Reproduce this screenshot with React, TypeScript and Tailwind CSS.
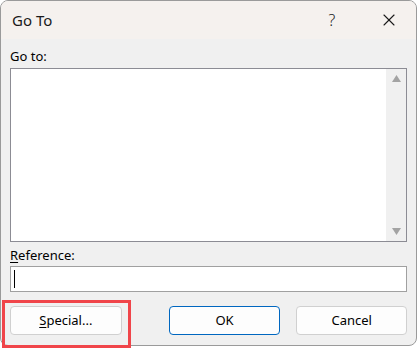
import { X } from "lucide-react";

export default function App() {
  return (
    <div className="w-[419px] h-[348px] bg-white relative" style={{ fontFamily: '"Noto Sans", "Segoe UI", sans-serif' }}>
      <div className="w-[417px] h-[346px] rounded-[8px] border border-[#9a9a9a] overflow-hidden bg-[#f0f0f0] flex flex-col">
        <div className="h-[38px] shrink-0 bg-[#f5f1ee] flex items-center pl-[11px] text-[15px] text-[#1a1a1a]">
          <span className="flex-1">Go To</span>
          <span className="w-[40px] text-center text-[16px] font-light mr-[14px]">?</span>
          <span className="w-[46px] flex justify-center mr-[4px]">
            <X className="size-[20px]" strokeWidth={1.3} />
          </span>
        </div>
        <div className="flex flex-col px-[9px] text-[13px] text-black">
          <div className="h-[29px] flex items-center pt-[6px]">Go to:</div>
          <div className="h-[174px] border border-[#8c8c94] bg-white flex justify-end">
            <div className="w-[20px] bg-[#f0f0f0] flex flex-col items-center justify-between py-[6px]">
              <svg width="9" height="7" viewBox="0 0 9 7"><path d="M4.5 0 L9 7 L0 7 Z" fill="#a3a3a3" /></svg>
              <svg width="9" height="7" viewBox="0 0 9 7"><path d="M0 0 L9 0 L4.5 7 Z" fill="#a3a3a3" /></svg>
            </div>
          </div>
          <div className="h-[24px] flex items-center pt-[3px]">
            <span><span className="underline underline-offset-2">R</span>eference:</span>
          </div>
          <div className="h-[26px] border border-[#a0a0a0] bg-white flex items-center pl-[3px]">
            <div className="w-px h-[18px] bg-black" />
          </div>
          <div className="flex mt-[14px] items-center">
            <div className="w-[112px] h-[29px] rounded-[4px] border border-[#d0d0d0] bg-[#fdfdfd] flex items-center justify-center">
              <span><span className="underline underline-offset-2">S</span>pecial...</span>
            </div>
            <div className="w-[112px] h-[29px] ml-[47px] rounded-[4px] border border-[#0067c0] bg-[#fdfdfd] flex items-center justify-center">
              OK
            </div>
            <div className="w-[111px] h-[29px] ml-[16px] rounded-[4px] border border-[#d0d0d0] bg-[#fdfdfd] flex items-center justify-center">
              Cancel
            </div>
          </div>
        </div>
      </div>
      <div className="absolute left-[2px] top-[300px] w-[129px] h-[48px] border-[3px] border-[#f0454a]" />
    </div>
  );
}
